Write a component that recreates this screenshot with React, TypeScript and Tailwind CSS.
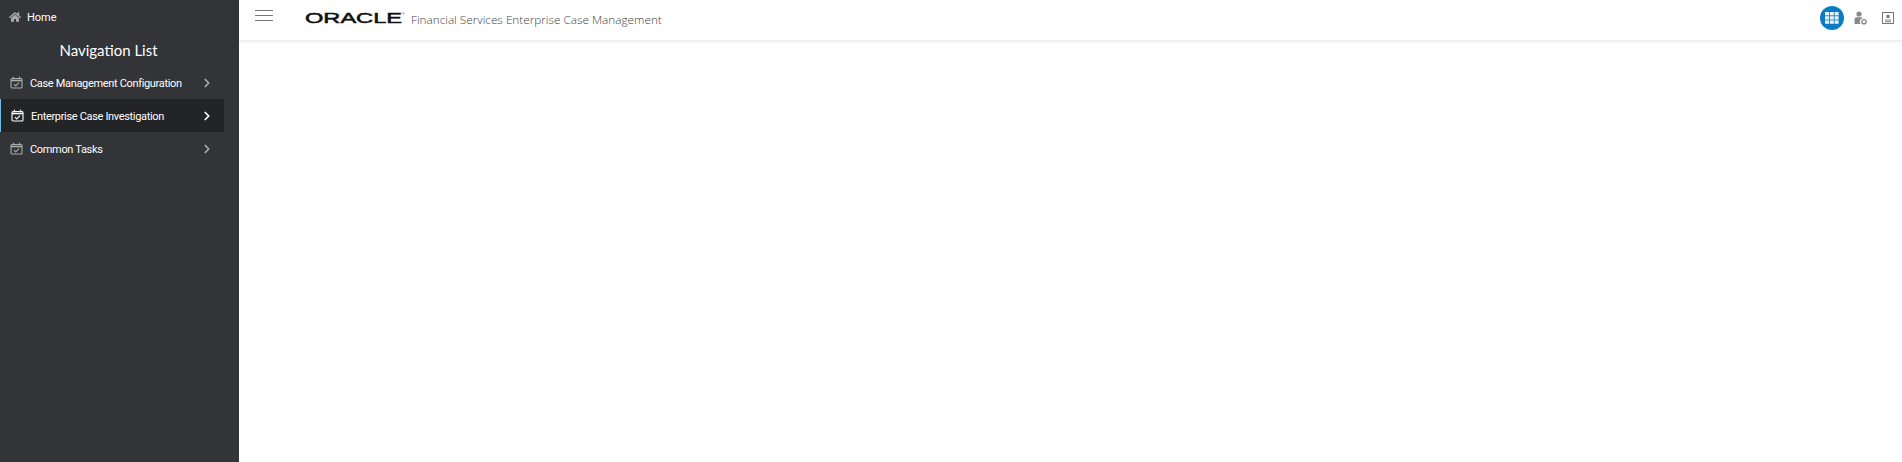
import { ChevronRight } from 'lucide-react';
import { FaHome } from 'react-icons/fa';
import clsx from 'clsx';

const navItems = [
  { label: 'Case Management Configuration', active: false },
  { label: 'Enterprise Case Investigation', active: true },
  { label: 'Common Tasks', active: false },
];

function CalendarIcon({ className }: { className?: string }) {
  return (
    <svg viewBox="0 0 13 13" className={className} fill="none" stroke="currentColor">
      <rect x="1" y="2.5" width="11" height="9.5" rx="1" strokeWidth="1.1" />
      <path d="M1 4.5h11" strokeWidth="1.6" />
      <path d="M3.5 0.8v2.4M9.5 0.8v2.4" strokeWidth="1.2" />
      <path d="M4 8.2l1.7 1.7 3.3-3.2" strokeWidth="1.1" />
    </svg>
  );
}

function GridIcon() {
  return (
    <svg viewBox="0 0 14 12" className="w-[14px] h-[12px]" fill="#e8f2fa">
      {[0, 4.8, 9.6].map((x) =>
        [0, 4.2, 8.4].map((y) => <rect key={`${x}-${y}`} x={x} y={y} width="4" height="3.4" />)
      )}
    </svg>
  );
}

function UserGearIcon() {
  return (
    <svg viewBox="0 0 14 14" className="w-[14px] h-[14px]" fill="#8a8a8a">
      <circle cx="6" cy="3" r="2.6" />
      <path d="M1.5 13V8.5c0-1.5 1-2.3 2.3-2.3h4.4c.8 0 1.4.3 1.8.8-2 .3-3.3 2-3.2 3.6 0 .9.3 1.7.8 2.4z" />
      <circle cx="11" cy="10.7" r="2.1" fill="none" stroke="#8a8a8a" strokeWidth="1.4" />
    </svg>
  );
}

function ContactIcon() {
  return (
    <svg viewBox="0 0 12 12" className="w-[12px] h-[12px]" fill="none" stroke="#777">
      <rect x="0.5" y="0.5" width="11" height="11" />
      <path d="M4.5 3h3v3h-3z" fill="#777" stroke="none" />
      <path d="M3 8h6M3 9.7h6" strokeWidth="0.9" />
    </svg>
  );
}

export default function App() {
  return (
    <div className="flex h-[462px] w-[1902px] overflow-hidden bg-white font-['Roboto',sans-serif]">
      {/* Sidebar */}
      <aside className="w-[239px] shrink-0 bg-[#323437] text-white">
        <div className="flex h-[34px] items-center pl-[9px] text-[11px]">
          <FaHome className="mr-[6px] h-[12px] w-[12px] shrink-0 text-[#a9abad]" />
          <span className="pt-[2px]">Home</span>
        </div>
        <h2 className="h-[32px] pr-[22px] text-center font-['Lato',sans-serif] text-[15px] leading-[32px]">
          Navigation List
        </h2>
        <ul className="w-[224px]">
          {navItems.map((item) => (
            <li
              key={item.label}
              className={clsx(
                'flex h-[33px] items-center pl-[10px] pr-[10px] text-[11px] tracking-[-0.33px]',
                item.active && 'border-l-[1px] border-[#6cc0e5] bg-[#232426] pl-[9px]'
              )}
            >
              <CalendarIcon
                className={clsx('mr-[7px] h-[13px] w-[13px] shrink-0', item.active ? 'text-white' : 'text-[#a9abad]')}
              />
              <span className="flex-1 whitespace-nowrap pt-[3px]">{item.label}</span>
              <ChevronRight
                className={clsx('h-[14px] w-[14px] shrink-0', item.active ? 'text-white' : 'text-[#a9abad]')}
                strokeWidth={3}
              />
            </li>
          ))}
        </ul>
      </aside>

      {/* Main */}
      <div className="flex-1">
        <header className="flex h-[41px] items-center border-b border-[#eeeeee] bg-white shadow-[0_1px_3px_rgba(0,0,0,0.08)]">
          <div className="mb-[9px] ml-[16px] flex w-[18px] flex-col gap-[4px]">
            <span className="h-px bg-[#777]" />
            <span className="h-px bg-[#777]" />
            <span className="h-px bg-[#777]" />
          </div>
          <svg viewBox="0 0 100 14" className="mb-[7px] ml-[32px] h-[14px] w-[100px]">
            <text
              x="0"
              y="12.5"
              textLength="97"
              lengthAdjust="spacingAndGlyphs"
              fontSize="14"
              fontWeight="400"
              stroke="#111"
              strokeWidth="0.5"
              fill="#111"
              fontFamily="'Liberation Sans', sans-serif"
            >
              ORACLE
            </text>
            <text x="97" y="5" fontSize="3.5" fill="#333" fontFamily="'Liberation Sans', sans-serif">
              ®
            </text>
          </svg>
          <span className="ml-[6px] font-['Open_Sans',sans-serif] text-[11.75px] font-light text-[#444]">
            Financial Services Enterprise Case Management
          </span>
          <div className="ml-auto flex items-center pb-[4px]">
            <div className="flex h-[24px] w-[24px] items-center justify-center rounded-full bg-[#0a7cc4]">
              <GridIcon />
            </div>
            <div className="ml-[9px]">
              <UserGearIcon />
            </div>
            <div className="ml-[15px] mr-[8px]">
              <ContactIcon />
            </div>
          </div>
        </header>
      </div>
    </div>
  );
}
